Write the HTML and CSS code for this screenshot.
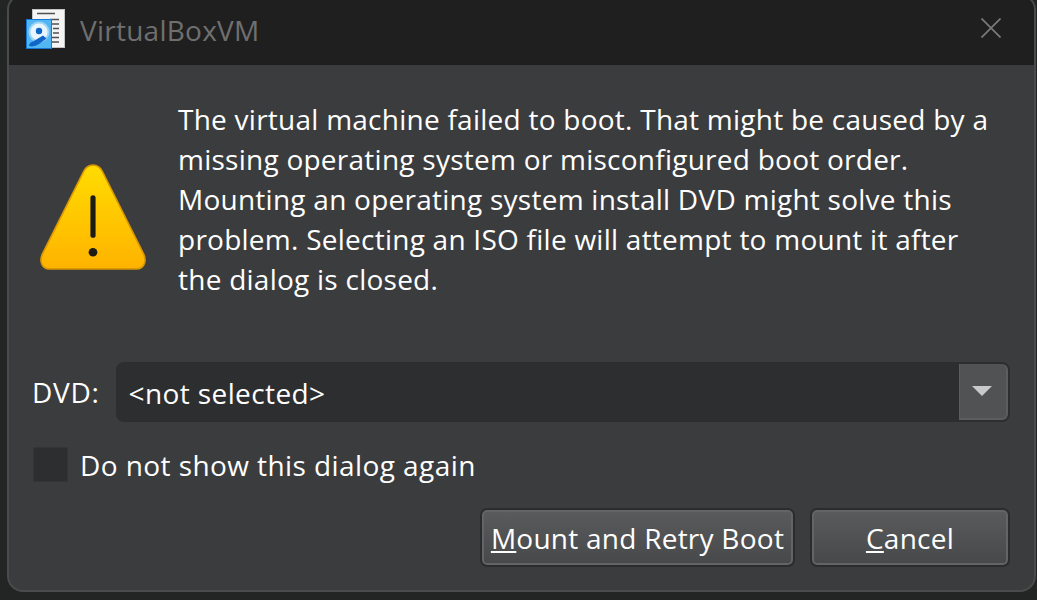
FILE: index.html
```html
<!DOCTYPE html>
<html lang="en">
<head>
<meta charset="utf-8">
<title>VirtualBoxVM</title>
<link rel="stylesheet" href="styles.css">
</head>
<body>
<div class="window">
  <header class="titlebar">
    <svg class="app-icon" viewBox="0 0 40 40" width="40" height="40" aria-hidden="true">
      <rect x="6.500" y="0.500" width="32" height="38" fill="#f4f4f4" stroke="#c4c4c4"/>
      <path d="M11 4.500H29M24 10.500H33M26 15H33M27 19.500H33M27 24H33M26 28.500H33M25 33H33" stroke="#505050" stroke-width="1.300" fill="none"/>
      <rect x="0.500" y="10.500" width="25" height="29" fill="#52b6f3" stroke="#1478d8"/>
      <circle cx="13" cy="23" r="10.500" fill="#9ed4f5"/>
      <circle cx="13" cy="23" r="8.500" fill="#e9f6fd"/>
      <circle cx="13" cy="22" r="3.200" fill="#0f66c8"/>
      <path d="M3 37Q3 33.500 7 32.500L17 26.500L20.500 29.500L13 35Q8 38.500 3 37Z" fill="#0f66c8"/>
    </svg>
    <span class="title">VirtualBoxVM</span>
    <svg class="close" viewBox="0 0 20 20" width="20" height="20" aria-hidden="true">
      <path d="M0.500 0.500L19.500 19.500M19.500 0.500L0.500 19.500" stroke="#7a7a7a" stroke-width="1.700" fill="none"/>
    </svg>
  </header>
  <main class="content">
    <section class="message">
      <svg class="warning" viewBox="0 0 108 108" width="112" height="112" aria-hidden="true">
        <defs>
          <linearGradient id="warnFill" x1="0" y1="0" x2="0" y2="1">
            <stop offset="0" stop-color="#ffdc00"/>
            <stop offset="1" stop-color="#ffb300"/>
          </linearGradient>
        </defs>
        <path d="M54 4C59 4 61 6 63 10L103 90C106 97 103 104 96 104H12C5 104 2 97 5 90L45 10C47 6 49 4 54 4Z" fill="url(#warnFill)" stroke="#d99700" stroke-width="1.500"/>
        <rect x="51.500" y="33" width="5" height="41" rx="2.500" fill="#1c1c14"/>
        <circle cx="54" cy="88" r="4.200" fill="#1c1c14"/>
      </svg>
      <p class="text">The virtual machine failed to boot. That might be caused by a<br>missing operating system or misconfigured boot order.<br>Mounting an operating system install DVD might solve this<br>problem. Selecting an ISO file will attempt to mount it after<br>the dialog is closed.</p>
    </section>
    <section class="dvd-row">
      <label class="dvd-label">DVD:</label>
      <div class="combo">
        <span class="combo-value">&lt;not selected&gt;</span>
        <span class="combo-arrow"><span class="triangle"></span></span>
      </div>
    </section>
    <section class="check-row">
      <span class="checkbox"></span>
      <span class="check-label">Do not show this dialog again</span>
    </section>
    <footer class="buttons">
      <button class="btn btn-mount"><u>M</u>ount and Retry Boot</button>
      <button class="btn btn-cancel"><u>C</u>ancel</button>
    </footer>
  </main>
</div>
</body>
</html>
```
FILE: styles.css
```css
* { box-sizing: border-box; }
html, body { margin: 0; height: 600px; overflow: hidden; background: #232524; }
body { font-family: "Open Sans", "Noto Sans", "Liberation Sans", sans-serif; color: #fff; font-size: 28px; letter-spacing: 0.25px; }
.window {
  width: 1029px;
  height: 598px;
  margin: -6px 0 0 7px;
  border: 2px solid #4a4b4c;
  border-radius: 16px;
  overflow: hidden;
  background: #3b3c3e;
  display: flex;
  flex-direction: column;
}
.titlebar {
  height: 69px;
  flex: none;
  background: #1f1f1f;
  display: flex;
  align-items: center;
  padding: 0 33px 0 17px;
}
.app-icon { flex: none; margin: 0 14px 4px 0; }
.title { color: #6f6f6f; flex: 1; margin-bottom: 2px; }
.close { flex: none; margin-bottom: 6px; }
.content { flex: 1; display: flex; flex-direction: column; padding: 0 24px; }
.message { display: flex; height: 297px; padding-top: 34px; }
.warning { flex: none; margin: 62px 29px 0 4px; }
.text { margin: 0; line-height: 40px; white-space: nowrap; }
.dvd-row { display: flex; align-items: center; height: 60px; }
.dvd-label { width: 83.500px; margin-left: -1px; flex: none; letter-spacing: 0.7px; }
.combo { flex: 1; height: 60px; background: #2d2e30; border: 2px solid #2d2e30; border-radius: 8px; display: flex; align-items: stretch; justify-content: space-between; }
.combo-value { padding: 1px 0 0 11px; align-self: center; letter-spacing: 0.4px; }
.combo-arrow { width: 49px; padding-right: 3px; background: #515254; border-right: 2px solid #5c5d5f; border-bottom: 2px solid #5c5d5f; border-left: 1px solid #5c5d5f; border-radius: 0 6px 6px 0; display: flex; align-items: center; justify-content: center; }
.triangle { width: 0; height: 0; border-left: 10px solid transparent; border-right: 10px solid transparent; border-top: 10px solid #c9c9c9; }
.check-row { display: flex; align-items: center; margin-top: 25px; height: 35px; }
.checkbox { flex: none; width: 35px; height: 35px; background: #2d2e30; border: 1px solid #333436; border-radius: 2px; margin-right: 12px; }
.check-label { letter-spacing: 0.42px; }
.buttons { display: flex; justify-content: flex-end; gap: 15px; margin-top: 26px; }
.btn {
  height: 59px;
  padding: 0;
  background: linear-gradient(#5a5b5d, #47484a);
  border: 2px solid #2b2c2e;
  box-shadow: inset 0 0 0 2px #636466;
  border-radius: 7px;
  color: #fff;
  font: inherit;
  letter-spacing: inherit;
  white-space: nowrap;
}
.btn-mount { width: 315px; }
.btn-cancel { width: 200px; }
```
